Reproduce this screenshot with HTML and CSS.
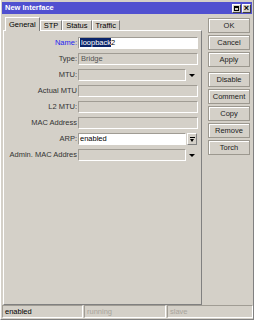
FILE: index.html
```html
<!DOCTYPE html>
<html>
<head>
  <title>New Interface</title>
  <meta name="viewport" content="width=device-width, initial-scale=1.0">
  <link rel="stylesheet" href="styles.css">
</head>
<body>
  <div class="window">
    <div class="titlebar">
      <span class="title">New Interface</span>
      <span class="wbtns">
        <span class="wbtn"><span class="maxbox"></span></span>
        <span class="wbtn close">&#215;</span>
      </span>
    </div>
    <div class="main">
      <div class="tabarea">
        <div class="tabs">
          <div class="tab active">General</div>
          <div class="tab">STP</div>
          <div class="tab">Status</div>
          <div class="tab">Traffic</div>
        </div>
        <div class="panel">
          <div class="row">
            <div class="lbl req">Name:</div>
            <div class="field edit"><span class="sel">loopback</span>2</div>
          </div>
          <div class="row">
            <div class="lbl">Type:</div>
            <div class="field">Bridge</div>
          </div>
          <div class="row">
            <div class="lbl">MTU:</div>
            <div class="field short"></div>
            <div class="drop"><span class="arrow"></span></div>
          </div>
          <div class="row">
            <div class="lbl">Actual MTU</div>
            <div class="field"></div>
          </div>
          <div class="row">
            <div class="lbl">L2 MTU:</div>
            <div class="field"></div>
          </div>
          <div class="row">
            <div class="lbl">MAC Address</div>
            <div class="field"></div>
          </div>
          <div class="row">
            <div class="lbl">ARP:</div>
            <div class="field short edit">enabled</div>
            <div class="minibtn"><span class="bar"></span><span class="arrow"></span></div>
          </div>
          <div class="row">
            <div class="lbl">Admin. MAC Addres</div>
            <div class="field short"></div>
            <div class="drop"><span class="arrow"></span></div>
          </div>
        </div>
      </div>
      <div class="side">
        <div class="btn">OK</div>
        <div class="btn">Cancel</div>
        <div class="btn">Apply</div>
        <div class="btn spaced">Disable</div>
        <div class="btn">Comment</div>
        <div class="btn">Copy</div>
        <div class="btn">Remove</div>
        <div class="btn">Torch</div>
      </div>
    </div>
    <div class="statusbar">
      <div class="status">enabled</div>
      <div class="status dim">running</div>
      <div class="status dim">slave</div>
    </div>
  </div>
</body>
</html>
```

FILE: styles.css
```css
body {
  margin: 0;
  font-family: 'Liberation Sans', Arial, sans-serif;
  font-size: 7.5px;
  color: #000;
}
.window {
  width: 254px;
  height: 320px;
  box-sizing: border-box;
  background: #d4d0c8;
  border-left: 1px solid #fff;
  border-right: 1px solid #808080;
  border-bottom: 1px solid #808080;
  display: flex;
  flex-direction: column;
}
.titlebar {
  margin: 2px 1px 0 1px;
  height: 12px;
  background: #5050d0;
  display: flex;
  align-items: center;
  justify-content: space-between;
  padding-left: 3px;
}
.title {
  color: #fff;
  font-weight: bold;
  line-height: 12px;
}
.wbtns {
  display: flex;
  gap: 1px;
  margin-right: 1px;
}
.wbtn {
  width: 9px;
  height: 9px;
  box-sizing: border-box;
  background: #d4d0c8;
  border: 1px solid;
  border-color: #fff #404040 #404040 #fff;
  display: flex;
  align-items: center;
  justify-content: center;
  font-size: 9px;
  font-weight: bold;
  line-height: 7px;
}
.maxbox {
  width: 5px;
  height: 5px;
  box-sizing: border-box;
  border: 1px solid #000;
  border-top-width: 2px;
}
.main {
  flex: 1;
  display: flex;
}
.tabarea {
  width: 199px;
  margin-left: 2px;
  display: flex;
  flex-direction: column;
}
.tabs {
  height: 16px;
  display: flex;
  align-items: flex-end;
  padding-left: 2px;
}
.tab {
  height: 9px;
  line-height: 9px;
  padding: 0 3px;
  border: 1px solid;
  border-bottom: none;
  border-color: #fff #808080 #808080 #fff;
  color: #000;
}
.tab.active {
  height: 13px;
  line-height: 13px;
  margin-bottom: -1px;
  background: #d4d0c8;
  position: relative;
  z-index: 1;
}
.panel {
  flex: 1;
  border: 1px solid;
  border-color: #fff #808080 #808080 #fff;
  padding: 6px 0 0 1px;
  display: flex;
  flex-direction: column;
  gap: 4px;
}
.row {
  height: 12px;
  display: flex;
  align-items: center;
}
.lbl {
  width: 72px;
  text-align: right;
  white-space: nowrap;
  overflow: hidden;
  color: #333;
  line-height: 12px;
}
.lbl.req {
  color: #2424f0;
}
.field {
  margin-left: 1px;
  width: 120px;
  height: 12px;
  box-sizing: border-box;
  border: 1px solid;
  border-color: #a09c94 #fff #fff #a09c94;
  line-height: 10px;
  padding-left: 2px;
  color: #555;
  white-space: nowrap;
  overflow: hidden;
}
.field.short {
  width: 108px;
}
.field.edit {
  background: #fff;
  color: #000;
  padding-left: 1px;
}
.sel {
  background: #0a246a;
  color: #fff;
  padding: 0 0 0 1px;
}
.drop {
  width: 12px;
  display: flex;
  justify-content: center;
}
.arrow {
  width: 0;
  height: 0;
  border-left: 3px solid transparent;
  border-right: 3px solid transparent;
  border-top: 3px solid #000;
}
.minibtn {
  margin-left: 1px;
  width: 10px;
  height: 12px;
  box-sizing: border-box;
  border: 1px solid;
  border-color: #fff #808080 #808080 #fff;
  display: flex;
  flex-direction: column;
  align-items: center;
  justify-content: center;
  gap: 1px;
}
.minibtn .bar {
  width: 5px;
  height: 1px;
  background: #000;
}
.minibtn .arrow {
  border-left-width: 2px;
  border-right-width: 2px;
  border-top-width: 3px;
}
.side {
  flex: 1;
  padding: 4px 0 0 6px;
  display: flex;
  flex-direction: column;
  gap: 2px;
}
.btn {
  width: 42px;
  height: 15px;
  box-sizing: border-box;
  border: 1px solid #9c988f;
  box-shadow: inset 1px 1px 0 #fff;
  text-align: center;
  line-height: 13px;
  color: #222;
}
.btn.spaced {
  margin-top: 3px;
}
.statusbar {
  height: 14px;
  margin: 0 0 0 1px;
  display: grid;
  grid-template-columns: 81px 82px 1fr;
  gap: 1px;
}
.status {
  height: 13px;
  box-sizing: border-box;
  border: 1px solid;
  border-color: #a09c94 #fff #fff #a09c94;
  line-height: 11px;
  padding-left: 2px;
  color: #000;
}
.status.dim {
  color: #a8a49c;
}
```
